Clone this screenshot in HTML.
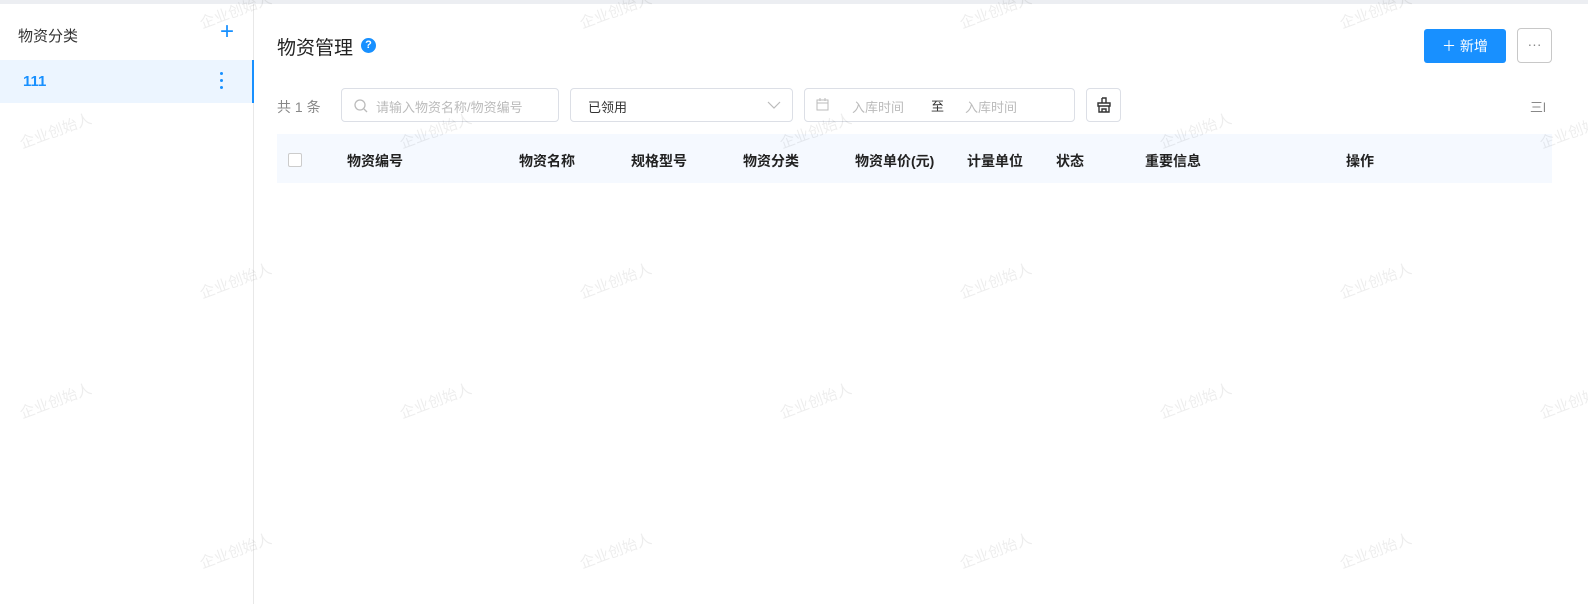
<!DOCTYPE html><html><head><meta charset="utf-8"><style>
*{box-sizing:border-box;margin:0;padding:0}
body{width:1588px;height:604px;background:#fff;font-family:"Liberation Sans","Noto Sans CJK SC",sans-serif;position:relative;overflow:hidden;color:#333}
.top{position:absolute;left:0;top:0;width:1588px;height:4px;background:#eceef2}
.side{position:absolute;left:0;top:4px;width:254px;height:600px;border-right:1px solid #e8e8e8}
.abs{position:absolute}
.wm{position:absolute;color:rgba(0,0,0,0.07);font-size:15px;transform:rotate(-20deg);white-space:nowrap}
.inp{position:absolute;top:88px;height:34px;border:1px solid #dcdfe6;border-radius:4px;font-size:13px}
.th{position:absolute;top:151px;font-size:14px;font-weight:bold;color:#222}
</style></head><body>
<div class="top"></div>
<div class="side">
<div class="abs" style="left:18px;top:21px;font-size:15px;color:#333">物资分类</div>
<div class="abs" style="left:220px;top:13px;font-size:24px;color:#1890ff;line-height:30px">+</div>
<div class="abs" style="left:0;top:56px;width:254px;height:43px;background:#ecf5ff;border-right:2px solid #1890ff"></div>
<div class="abs" style="left:23px;top:69px;font-size:15px;font-weight:bold;color:#1890ff">111</div>
<div class="abs" style="left:220px;top:68px;width:3px;height:3px;border-radius:2px;background:#1890ff"></div>
<div class="abs" style="left:220px;top:75px;width:3px;height:3px;border-radius:2px;background:#1890ff"></div>
<div class="abs" style="left:220px;top:82px;width:3px;height:3px;border-radius:2px;background:#1890ff"></div>
</div>
<div class="abs" style="left:277px;top:33px;font-size:19px;color:#222">物资管理</div>
<div class="abs" style="left:361px;top:38px;width:15px;height:15px;border-radius:50%;background:#1890ff;color:#fff;font-size:11px;font-weight:bold;text-align:center;line-height:15px">?</div>
<div class="abs" style="left:1424px;top:29px;width:82px;height:34px;background:#1890ff;border-radius:3px;color:#fff;font-size:14px;text-align:center;line-height:34px">＋ 新增</div>
<div class="abs" style="left:1517px;top:28px;width:35px;height:35px;border:1px solid #c8c8c8;border-radius:4px;color:#888;text-align:center;line-height:30px;font-size:14px">···</div>
<div class="abs" style="left:277px;top:97px;font-size:14px;color:#888">共 1 条</div>
<div class="inp" style="left:341px;width:218px;color:#bbb;padding:8px 0 0 34px">请输入物资名称/物资编号
<svg class="abs" style="left:12px;top:10px" width="14" height="14" viewBox="0 0 14 14"><circle cx="6" cy="6" r="5" fill="none" stroke="#bbb" stroke-width="1.3"/><path d="M10 10l3 3" stroke="#bbb" stroke-width="1.3"/></svg></div>
<div class="inp" style="left:570px;width:223px;color:#333;padding:8px 0 0 17px">已领用
<svg class="abs" style="left:196px;top:12px" width="14" height="9" viewBox="0 0 14 9"><path d="M1 1l6 6 6-6" fill="none" stroke="#bbb" stroke-width="1.2"/></svg></div>
<div class="inp" style="left:804px;width:271px;color:#bbb">
<svg class="abs" style="left:11px;top:9px" width="13" height="13" viewBox="0 0 13 13"><rect x="1" y="2" width="11" height="10" fill="none" stroke="#bbb"/><path d="M1 5h11M4 0v3M9 0v3" stroke="#bbb"/></svg>
<span class="abs" style="left:47px;top:8px">入库时间</span><span class="abs" style="left:126px;top:7px;color:#333">至</span><span class="abs" style="left:160px;top:8px">入库时间</span></div>
<div class="inp" style="left:1086px;width:35px"><svg class="abs" style="left:9px;top:8px" width="16" height="17" viewBox="0 0 16 17"><path d="M6 1h4v5M6 1v5M2 6h12v3H2zM3 9v6h10V9M6 15v-3h4v3" fill="none" stroke="#333" stroke-width="1.4"/></svg></div>
<div class="abs" style="left:1530px;top:97px;font-size:13px;color:#888">三l</div>
<div class="abs" style="left:277px;top:134px;width:1275px;height:49px;background:#f5f9ff"></div>
<div class="abs" style="left:288px;top:153px;width:14px;height:14px;border:1px solid #ccc;border-radius:2px;background:#fff"></div>
<div class="th" style="left:347px">物资编号</div><div class="th" style="left:519px">物资名称</div><div class="th" style="left:631px">规格型号</div><div class="th" style="left:743px">物资分类</div><div class="th" style="left:855px">物资单价(元)</div><div class="th" style="left:967px">计量单位</div><div class="th" style="left:1056px">状态</div><div class="th" style="left:1145px">重要信息</div><div class="th" style="left:1346px">操作</div>
<div class="wm" style="left:198px;top:0px">企业创始人</div><div class="wm" style="left:578px;top:0px">企业创始人</div><div class="wm" style="left:958px;top:0px">企业创始人</div><div class="wm" style="left:1338px;top:0px">企业创始人</div>
<div class="wm" style="left:18px;top:120px">企业创始人</div><div class="wm" style="left:398px;top:120px">企业创始人</div><div class="wm" style="left:778px;top:120px">企业创始人</div><div class="wm" style="left:1158px;top:120px">企业创始人</div><div class="wm" style="left:1538px;top:120px">企业创始人</div>
<div class="wm" style="left:198px;top:270px">企业创始人</div><div class="wm" style="left:578px;top:270px">企业创始人</div><div class="wm" style="left:958px;top:270px">企业创始人</div><div class="wm" style="left:1338px;top:270px">企业创始人</div>
<div class="wm" style="left:18px;top:390px">企业创始人</div><div class="wm" style="left:398px;top:390px">企业创始人</div><div class="wm" style="left:778px;top:390px">企业创始人</div><div class="wm" style="left:1158px;top:390px">企业创始人</div><div class="wm" style="left:1538px;top:390px">企业创始人</div>
<div class="wm" style="left:198px;top:540px">企业创始人</div><div class="wm" style="left:578px;top:540px">企业创始人</div><div class="wm" style="left:958px;top:540px">企业创始人</div><div class="wm" style="left:1338px;top:540px">企业创始人</div>
</body></html>
